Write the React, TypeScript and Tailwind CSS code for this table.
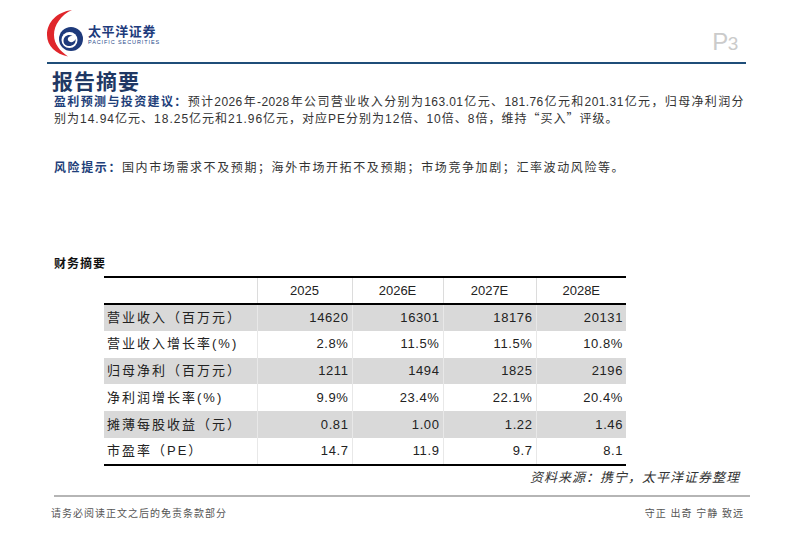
import React from 'react'

type Row = { label: string; values: string[]; shaded: boolean }

const years = ['2025', '2026E', '2027E', '2028E']

const rows: Row[] = [
  { label: '营业收入（百万元）', values: ['14620', '16301', '18176', '20131'], shaded: true },
  { label: '营业收入增长率(%)', values: ['2.8%', '11.5%', '11.5%', '10.8%'], shaded: false },
  { label: '归母净利（百万元）', values: ['1211', '1494', '1825', '2196'], shaded: true },
  { label: '净利润增长率(%)', values: ['9.9%', '23.4%', '22.1%', '20.4%'], shaded: false },
  { label: '摊薄每股收益（元）', values: ['0.81', '1.00', '1.22', '1.46'], shaded: true },
  { label: '市盈率（PE）', values: ['14.7', '11.9', '9.7', '8.1'], shaded: false },
]

const sans = "font-['Liberation_Sans','Noto_Sans_CJK_SC',sans-serif]"
const cjk = "font-['Noto_Sans_CJK_SC',sans-serif]"

function Logo() {
  return (
    <div className="flex items-start gap-[3px]">
      <svg width="38" height="48" viewBox="0 0 38 48">
        {/* red crescent */}
        <path d="M25 1 C10 3 0 13 0 26 C0 37 9 45 21 47.5 C13 42 7 35 7 26 C7 16 14 6 25 1 Z" fill="#e0262b" />
        {/* blue ring + swirl */}
        <circle cx="24" cy="30" r="12" fill="#1e3a7b" />
        <circle cx="22.5" cy="31" r="8" fill="#ffffff" />
        <path d="M16.5 32 C16.5 26.5 22 24.5 25.5 27 C22.5 26.8 20.2 28.6 21 31 C22 34 27 34 28.5 30 C29.5 35.5 23.5 38.5 19.5 36.5 C17.5 35.5 16.5 34 16.5 32 Z" fill="#1e3a7b" />
      </svg>
      <div className="flex flex-col pt-[15px]">
        <span className={`${cjk} text-[13px] leading-[14px] font-bold tracking-[0.6px] text-[#1d3b7c]`}>
          太平洋证券
        </span>
        <span className="font-['Liberation_Sans',sans-serif] text-[5.5px] leading-[8px] tracking-[0.9px] text-[#2b4c8c]">
          PACIFIC SECURITIES
        </span>
      </div>
    </div>
  )
}

export default function App() {
  return (
    <div className={`w-[800px] h-[536px] bg-white flex flex-col ${sans} text-[#333]`}>
      {/* header */}
      <div className="flex items-start justify-between pl-[47px] pr-[62px] pt-[9px] h-[62px]">
        <Logo />
        <div className="pt-[21px] font-['Liberation_Sans_Narrow','Liberation_Sans',sans-serif] text-[#cbcbcb] leading-none tracking-tight">
          <span className="text-[24px]">P</span>
          <span className="text-[19px]">3</span>
        </div>
      </div>
      <div className="ml-[47px] w-[699px] h-[2px] bg-[#1f4e79]" />

      {/* summary */}
      <div className="ml-[52px] w-[692px]">
        <h1 className={`mt-[2px] ${cjk} text-[21px] leading-[28px] font-bold tracking-[1px] text-[#1f3864]`}>
          报告摘要
        </h1>
        <div className="ml-[2px] text-[12px] leading-[16px] tracking-[0.4px]">
          <p className="text-justify [text-align-last:justify]">
            <span className="font-bold text-[#1f3f7a]">盈利预测与投资建议：</span>
            预计2026年-2028年公司营业收入分别为163.01亿元、181.76亿元和201.31亿元，归母净利润分
          </p>
          <p className="tracking-[1px]">
            别为14.94亿元、18.25亿元和21.96亿元，对应PE分别为12倍、10倍、8倍，维持<span className={cjk}>“</span>买入<span className={cjk}>”</span>评级。
          </p>
          <p className="mt-[33px] tracking-[1.6px]">
            <span className="font-bold text-[#1f3f7a]">风险提示：</span>
            国内市场需求不及预期；海外市场开拓不及预期；市场竞争加剧；汇率波动风险等。
          </p>
          <p className="mt-[80px] font-bold text-[#111] tracking-[1px]">财务摘要</p>
        </div>
      </div>

      {/* financial table */}
      <table className="mt-[4px] ml-[104px] w-[522px] table-fixed border-collapse text-[13px] text-[#222]">
        <colgroup>
          <col className="w-[153px]" />
          <col className="w-[95px]" />
          <col className="w-[91px]" />
          <col className="w-[93px]" />
          <col className="w-[90px]" />
        </colgroup>
        <thead>
          <tr className="h-[27px] border-t-2 border-b-2 border-black">
            <th className="font-normal" />
            {years.map((y) => (
              <th key={y} className="font-normal text-center border-l border-[#dcdcdc]">
                {y}
              </th>
            ))}
          </tr>
        </thead>
        <tbody className="border-b-2 border-black">
          {rows.map((r) => (
            <tr key={r.label} className={`h-[26.8px] ${r.shaded ? 'bg-[#d9d9d9]' : 'bg-white'}`}>
              <td className="pl-[3px] tracking-[2px] whitespace-nowrap">{r.label}</td>
              {r.values.map((v, i) => (
                <td key={i} className="pr-[3px] text-right tracking-[0.6px] border-l border-[#e8e8e8]">
                  {v}
                </td>
              ))}
            </tr>
          ))}
        </tbody>
      </table>
      <div className="w-[740px] mt-[4px] text-right text-[13px] leading-[16px] italic tracking-[1px] text-[#333]">
        资料来源：携宁，太平洋证券整理
      </div>

      {/* footer */}
      <div className="mt-auto mb-[15px] ml-[54px] w-[696px]">
        <div className="h-[2px] bg-[#b5b5b5]" />
        <div className="mt-[10px] flex justify-between text-[10px] leading-[14px] text-[#555] tracking-[1px]">
          <span className="-ml-[3px]">请务必阅读正文之后的免责条款部分</span>
          <span className="mr-[6px]">守正 出奇 宁静 致远</span>
        </div>
      </div>
    </div>
  )
}
